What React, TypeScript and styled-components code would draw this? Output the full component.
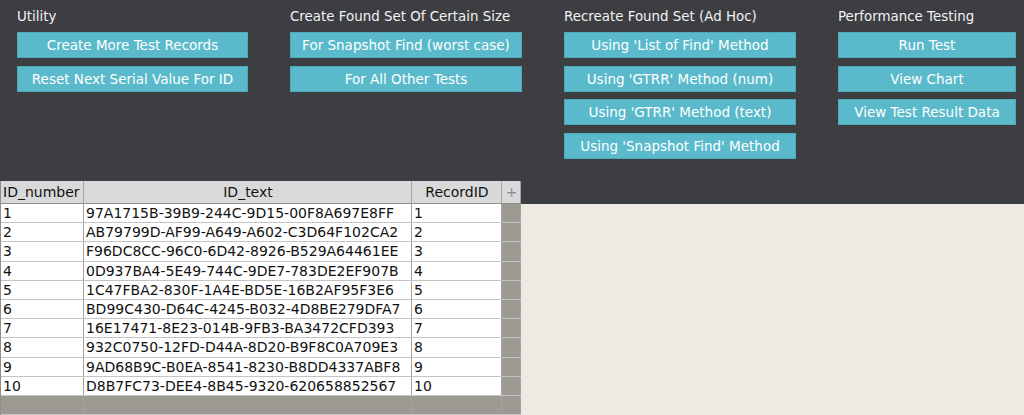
import React from "react";
import styled, { createGlobalStyle } from "styled-components";

const GlobalStyle = createGlobalStyle`
  html, body {
    margin: 0;
    padding: 0;
    background: #3d3e42;
  }
  body {
    font-family: "DejaVu Sans", Verdana, sans-serif;
    font-size: 13px;
  }
`;

const Page = styled.div`
  width: 1024px;
  height: 415px;
  overflow: hidden;
  display: flex;
  flex-direction: column;
  background: #3d3e42;
`;

const Toolbar = styled.div`
  display: flex;
  gap: 42px;
  padding: 9px 0 0 17px;
  height: 172px;
`;

const Group = styled.div<{ $width: number }>`
  display: flex;
  flex-direction: column;
  width: ${(p) => p.$width}px;
`;

const GroupTitle = styled.div`
  color: #f2f2f2;
  font-size: 13.4px;
  line-height: 16px;
  margin-bottom: 7px;
  white-space: nowrap;
`;

const ActionButton = styled.button`
  height: 26px;
  margin: 0 0 7.5px;
  padding: 0;
  border: 1px solid #4ea9b8;
  background: #5abacb;
  color: #ffffff;
  font-family: "DejaVu Sans", Verdana, sans-serif;
  font-size: 13.5px;
  text-align: center;
  white-space: nowrap;
  cursor: pointer;
`;

const Body = styled.div`
  display: flex;
  flex: 1;
`;

const Table = styled.div`
  width: 521px;
  display: flex;
  flex-direction: column;
  background: #9d9a94;
  border-left: 1px solid #8f8f8f;
  box-sizing: border-box;
`;

const Row = styled.div<{ $head?: boolean; $h: number }>`
  display: grid;
  grid-template-columns: 83px 328px 90px 19px;
  height: ${(p) => p.$h}px;
  border-bottom: 1px solid ${(p) => (p.$head ? "#8f8f8f" : "#c4c4c4")};
  box-sizing: border-box;
`;

const Cell = styled.div<{ $kind: "head" | "body" | "grey" | "plus"; $center?: boolean }>`
  border-right: 1px solid #a3a3a3;
  box-sizing: border-box;
  padding: 0 1px 0 2px;
  display: flex;
  align-items: center;
  justify-content: ${(p) => (p.$center ? "center" : "flex-start")};
  overflow: hidden;
  white-space: nowrap;
  font-size: 14px;
  color: ${(p) => (p.$kind === "plus" ? "#8a8a8a" : "#111")};
  background: ${(p) =>
    p.$kind === "head" || p.$kind === "plus"
      ? "#d9d9d9"
      : p.$kind === "grey"
      ? "#9d9a94"
      : "#ffffff"};
`;

const Filler = styled.div`
  flex: 1;
  margin-top: 23px;
  background: #eeeae3;
`;

const groups = [
  { title: "Utility", width: 231, buttons: ["Create More Test Records", "Reset Next Serial Value For ID"] },
  { title: "Create Found Set Of Certain Size", width: 232, buttons: ["For Snapshot Find (worst case)", "For All Other Tests"] },
  {
    title: "Recreate Found Set (Ad Hoc)",
    width: 232,
    buttons: [
      "Using 'List of Find' Method",
      "Using 'GTRR' Method (num)",
      "Using 'GTRR' Method (text)",
      "Using 'Snapshot Find' Method",
    ],
  },
  { title: "Performance Testing", width: 178, buttons: ["Run Test", "View Chart", "View Test Result Data"] },
];

const records = [
  "97A1715B-39B9-244C-9D15-00F8A697E8FF",
  "AB79799D-AF99-A649-A602-C3D64F102CA2",
  "F96DC8CC-96C0-6D42-8926-B529A64461EE",
  "0D937BA4-5E49-744C-9DE7-783DE2EF907B",
  "1C47FBA2-830F-1A4E-BD5E-16B2AF95F3E6",
  "BD99C430-D64C-4245-B032-4D8BE279DFA7",
  "16E17471-8E23-014B-9FB3-BA3472CFD393",
  "932C0750-12FD-D44A-8D20-B9F8C0A709E3",
  "9AD68B9C-B0EA-8541-8230-B8DD4337ABF8",
  "D8B7FC73-DEE4-8B45-9320-620658852567",
];

const App: React.FC = () => {
  return (
    <Page>
      <GlobalStyle />
      <Toolbar>
        {groups.map((g) => (
          <Group key={g.title} $width={g.width}>
            <GroupTitle>{g.title}</GroupTitle>
            {g.buttons.map((b) => (
              <ActionButton key={b}>{b}</ActionButton>
            ))}
          </Group>
        ))}
      </Toolbar>
      <Body>
        <Table>
          <Row $head $h={23}>
            <Cell $kind="head">ID_number</Cell>
            <Cell $kind="head" $center>ID_text</Cell>
            <Cell $kind="head" $center>RecordID</Cell>
            <Cell $kind="plus" $center>+</Cell>
          </Row>
          {records.map((r, i) => (
            <Row key={r} $h={19.2}>
              <Cell $kind="body">{i + 1}</Cell>
              <Cell $kind="body">{r}</Cell>
              <Cell $kind="body">{i + 1}</Cell>
              <Cell $kind="grey" />
            </Row>
          ))}
          <Row $h={19}>
            <Cell $kind="grey" />
            <Cell $kind="grey" />
            <Cell $kind="grey" />
            <Cell $kind="grey" />
          </Row>
        </Table>
        <Filler />
      </Body>
    </Page>
  );
};

export default App;
